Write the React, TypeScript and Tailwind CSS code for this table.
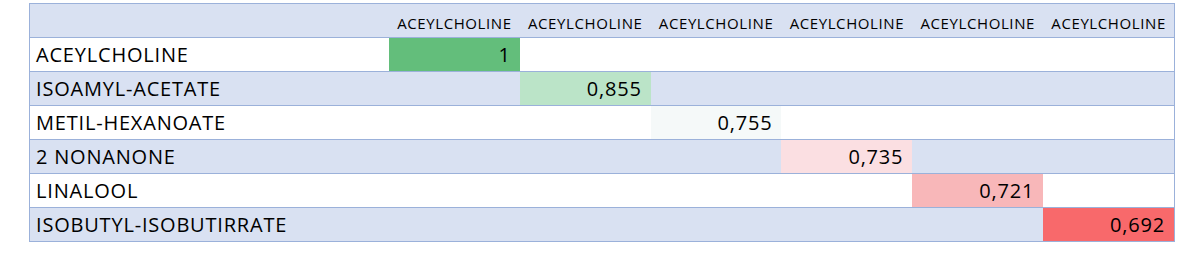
const columns = Array.from({ length: 6 }, () => 'ACEYLCHOLINE')

const rows = [
    { name: 'ACEYLCHOLINE', value: '1', bg: 'bg-[#63be7b]' },
    { name: 'ISOAMYL-ACETATE', value: '0,855', bg: 'bg-[#bbe4c8]' },
    { name: 'METIL-HEXANOATE', value: '0,755', bg: 'bg-[#f5f9f9]' },
    { name: '2 NONANONE', value: '0,735', bg: 'bg-[#fbdfe2]' },
    { name: 'LINALOOL', value: '0,721', bg: 'bg-[#f8b7b9]' },
    { name: 'ISOBUTYL-ISOBUTIRRATE', value: '0,692', bg: 'bg-[#f8696b]' },
]

export default function App() {
    return (
        <div className="h-[253px] w-[1189px] bg-white pl-[29px] pt-[3px] font-['Open_Sans',sans-serif] text-black">
            <div className="w-[1146px] border-x border-t border-[#9bb1da]">
                <div className="grid h-[34px] grid-cols-[359px_repeat(6,1fr)] border-b border-[#9bb1da] bg-[#d9e1f2]">
                    <div />
                    {columns.map((col, i) => (
                        <div key={i} className="flex items-end justify-center pb-[3px] text-[15px] tracking-[0.6px]">
                            {col}
                        </div>
                    ))}
                </div>
                {rows.map((row, r) => (
                    <div
                        key={row.name}
                        className={`grid h-[34px] grid-cols-[359px_repeat(6,1fr)] border-b border-[#9bb1da] ${
                            r % 2 === 0 ? 'bg-white' : 'bg-[#d9e1f2]'
                        }`}
                    >
                        <div className="flex items-center pl-[6px] text-[20px] tracking-[0.8px]">{row.name}</div>
                        {columns.map((_, c) => (
                            <div
                                key={c}
                                className={`flex items-center justify-end pr-[9px] text-[20px] tracking-[0.8px] ${c === r ? row.bg : ''}`}
                            >
                                {c === r ? row.value : ''}
                            </div>
                        ))}
                    </div>
                ))}
            </div>
        </div>
    )
}
